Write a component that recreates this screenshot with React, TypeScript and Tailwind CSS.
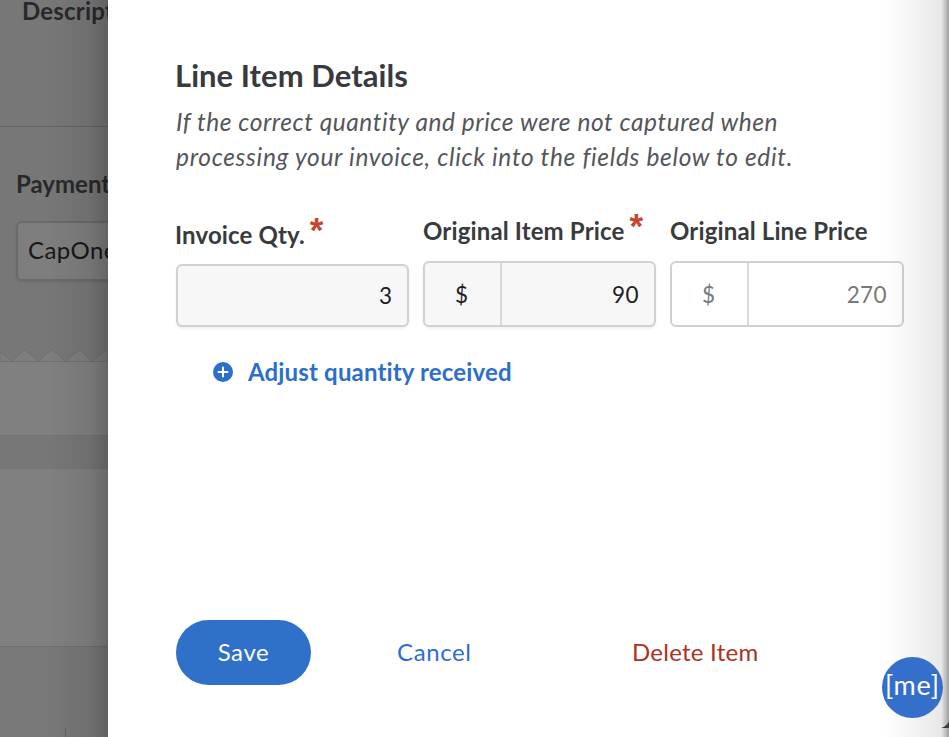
import React from 'react';

interface FieldLabelProps {
    text: string;
    required?: boolean;
    className?: string;
}

const FieldLabel: React.FC<FieldLabelProps> = ({ text, required = false, className = '' }) => (
    <label className={`flex h-[30px] items-start whitespace-nowrap text-[24px] font-bold leading-[30px] tracking-[0.14px] text-[#393a3d] ${className}`}>
        {text}
        {required && (
            <span className="-mt-[7px] ml-[5px] h-[30px] font-['Liberation_Sans',sans-serif] text-[35px] leading-[34px] tracking-normal text-[#c8452f]">*</span>
        )}
    </label>
);

interface MoneyFieldProps {
    value: string;
    readOnly?: boolean;
}

const MoneyField: React.FC<MoneyFieldProps> = ({ value, readOnly = false }) => (
    <div
        className={`flex h-[66px] rounded-[6px] border-2 border-[#d1d1d3] text-[22.5px] ${
            readOnly ? 'bg-white text-[#77797c]' : 'bg-[#f7f7f7] text-[#1d1d1f] shadow-[0_2px_3px_rgba(0,0,0,0.06)]'
        }`}
    >
        <div className="flex w-[77px] items-center justify-center border-r-2 border-[#d9d9db] pr-[2px] pt-[2px]">$</div>
        <div className="flex flex-1 items-center justify-end pr-[15px] pt-[2px] tracking-[0.4px]">{value}</div>
    </div>
);

// Dimmed invoice page that stays visible behind the drawer
const Backdrop: React.FC = () => (
    <aside className="relative flex h-full w-[108px] shrink-0 flex-col overflow-hidden bg-[#777777] whitespace-nowrap">
        <div className="h-[127px] shrink-0 border-b border-[#636363] pl-[22px]">
            <div className="-mt-[4px] text-[24px] font-bold leading-[30px] tracking-[0.2px] text-[#28292b]">Description</div>
        </div>
        <div className="h-[222px] shrink-0 pl-[16px] pt-[42px]">
            <div className="text-[24px] font-bold leading-[30px] text-[#28292b]">Payment</div>
            <div className="mt-[22px] flex h-[60px] w-[200px] items-center rounded-[6px] border-2 border-[#6a6a6a] bg-[#7e7e7e] pb-[2px] pl-[10px] text-[24px] tracking-[0.4px] text-[#161616] shadow-[0_1px_2px_rgba(0,0,0,0.1)]">
                CapOne
            </div>
        </div>
        <svg className="block h-[13px] w-[108px] shrink-0" viewBox="0 0 108 13">
            <path
                d="M0 3 L11.5 12 L25 .5 L38.5 12 L52 .5 L65.5 12 L79 .5 L92.5 12 L106 .5 L108 2 V13 H0Z"
                fill="#7e7e7e"
                stroke="#6f6f6f"
            />
            <path d="M0 12.5H108" stroke="#707070" />
        </svg>
        <div className="h-[73px] shrink-0 bg-[#808080]" />
        <div className="h-[34px] shrink-0 border-t border-b border-t-[#727272] border-b-[#747474] bg-[#777777]" />
        <div className="h-[177px] shrink-0 bg-[#808080]" />
        <div className="flex flex-1 flex-col justify-end border-t border-[#707070] bg-[#787878]">
            <div className="ml-[65px] h-[9px] border-l border-[#636363]" />
        </div>
        <div className="absolute inset-0 bg-linear-to-r from-transparent from-45% via-black/7 via-82% to-black/20" />
    </aside>
);

export default function App() {
    return (
        <div className="relative flex h-[737px] w-[949px] overflow-hidden bg-white font-['Lato','Open_Sans',sans-serif]">
            <Backdrop />

            <main className="flex flex-1 flex-col bg-white pl-[68px] pt-[56px]">
                <h1 className="-ml-px text-[31px] font-bold leading-[38px] tracking-[0.05px] text-[#393a3d]">Line Item Details</h1>
                <p className="mt-[10px] whitespace-nowrap text-[24.5px] italic leading-[35px] tracking-[0.54px] text-[#55565a]">
                    If the correct quantity and price were not captured when
                    <br />
                    <span className="tracking-[0.68px]">processing your invoice, click into the fields below to edit.</span>
                </p>

                <div className="mt-[42px] grid w-[728px] grid-cols-[233px_233px_234px] gap-x-[14px]">
                    <div className="pt-[4px]">
                        <FieldLabel text="Invoice Qty." required className="-ml-px" />
                        <div className="mt-[14px] flex h-[63px] items-center justify-end rounded-[6px] border-2 border-[#d1d1d3] bg-[#f7f7f7] pr-[15px] text-[22.5px] text-[#1d1d1f] shadow-[0_2px_3px_rgba(0,0,0,0.06)]">
                            3
                        </div>
                    </div>
                    <div>
                        <FieldLabel text="Original Item Price" required className="mb-[15px]" />
                        <MoneyField value="90" />
                    </div>
                    <div>
                        <FieldLabel text="Original Line Price" className="mb-[15px]" />
                        <MoneyField value="270" readOnly />
                    </div>
                </div>

                <button className="ml-[37px] mt-[30px] flex h-[30px] items-center self-start whitespace-nowrap text-[24px] font-bold leading-[30px] tracking-[0.16px] text-[#2c6ecb]">
                    <svg className="mr-[15px] size-[20px]" viewBox="0 0 20 20">
                        <circle cx="10" cy="10" r="10" fill="#2c6ecb" />
                        <path d="M10 5.5v9M5.5 10h9" stroke="#fff" strokeWidth="2" strokeLinecap="round" />
                    </svg>
                    Adjust quantity received
                </button>

                <div className="mt-auto mb-[52px] flex h-[65px] items-center whitespace-nowrap text-[24px] tracking-[0.6px]">
                    <button className="h-[65px] w-[135px] rounded-full bg-[#2f70c8] pb-[2px] text-white">Save</button>
                    <button className="ml-[86px] w-[75px] pb-[2px] text-left text-[#2c6ecb]">Cancel</button>
                    <button className="ml-[160px] pb-[2px] text-left tracking-[0.25px] text-[#ad3222]">Delete Item</button>
                </div>
            </main>

            {/* Shadow along the window edge */}
            <div className="pointer-events-none absolute inset-y-0 right-0 w-[65px] bg-linear-to-r from-transparent via-black/9 via-88% to-black/38" />
            <svg className="absolute right-0 top-[721px] h-[7px] w-[8px]" viewBox="0 0 8 7">
                <path d="M8 0 V7 H0 C4 6 7 3 8 0Z" fill="#3c3c3c" />
            </svg>
            <div className="absolute left-[882px] top-[657px] flex size-[61px] items-center justify-center rounded-full bg-[#346fc9] pb-[4px] text-[27px] tracking-[0.9px] text-white">
                [me]
            </div>
        </div>
    );
}
